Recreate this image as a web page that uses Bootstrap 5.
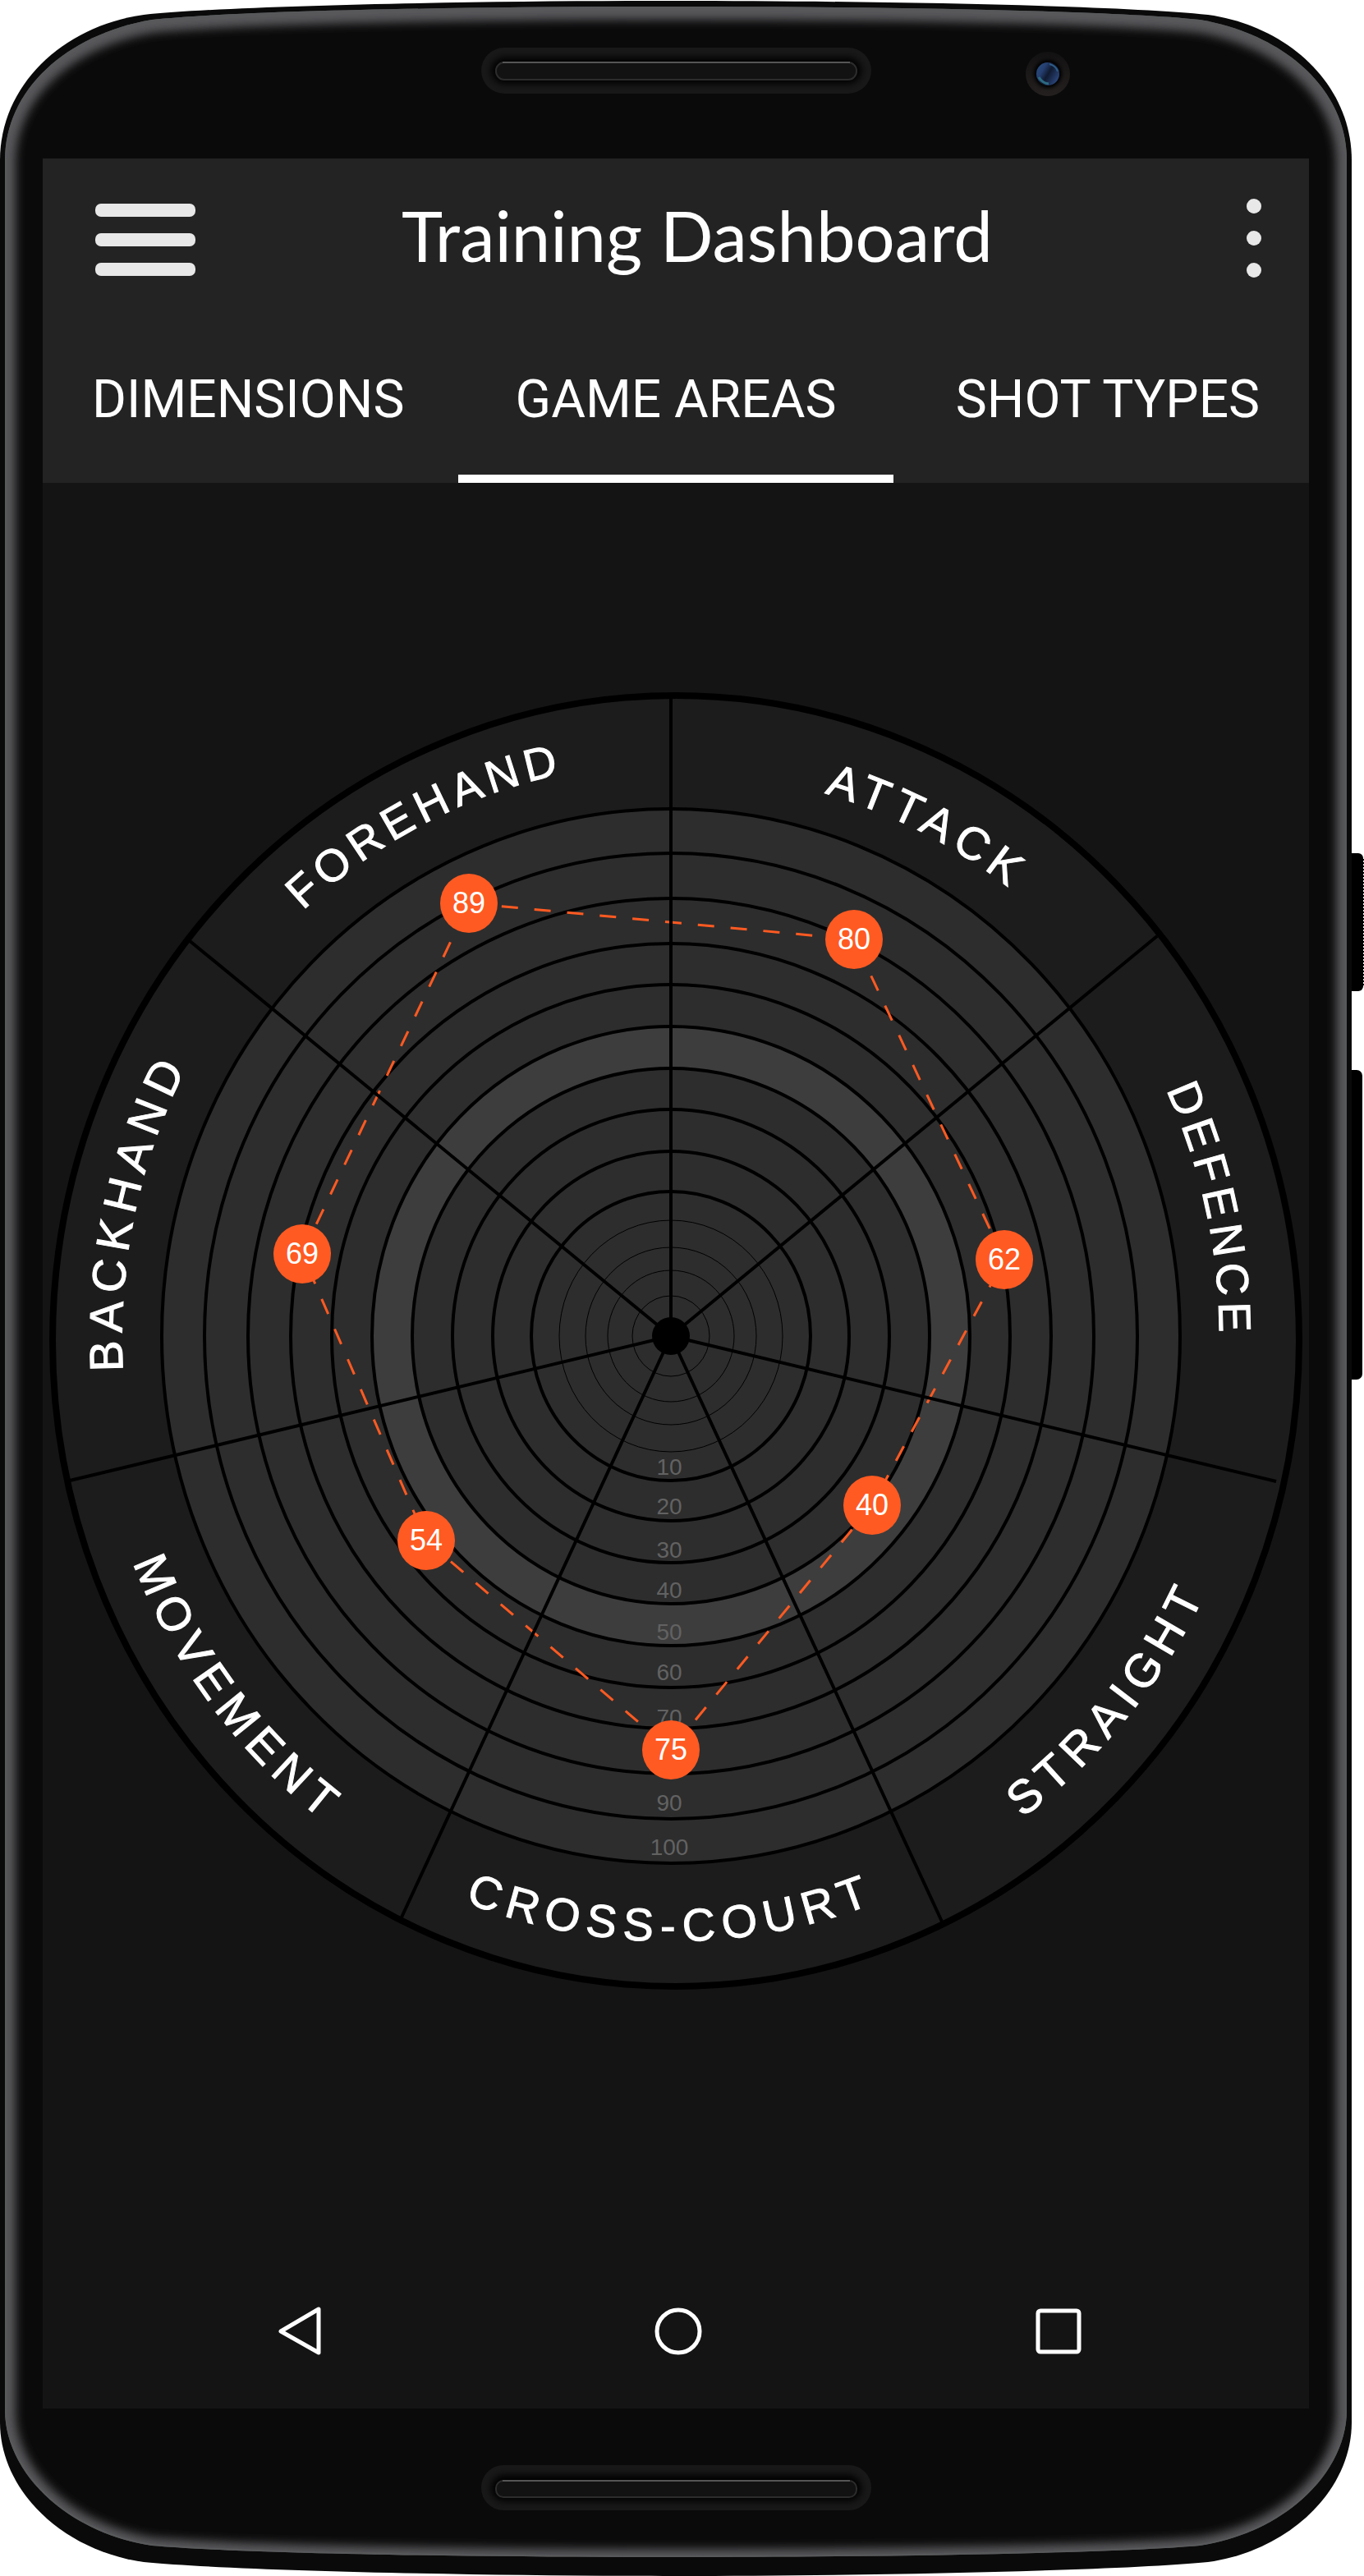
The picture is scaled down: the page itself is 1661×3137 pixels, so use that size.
<!DOCTYPE html>
<html lang="en">
<head>
<meta charset="utf-8">
<meta name="viewport" content="width=device-width, initial-scale=1">
<title>Training Dashboard</title>
<link href="https://cdn.jsdelivr.net/npm/bootstrap@5.3.0/dist/css/bootstrap.min.css" rel="stylesheet">
<style>
  body { background: #fff; font-family: Roboto, "Liberation Sans", sans-serif; }
  .device { padding: 193px 67px 204px 52px; }
  .device-shell { z-index: 0; }
  .device-screen { z-index: 1; background: #141414; }
  .app-top { background: #232323; }
  .app-bar { height: 193px; padding: 0 58px 0 64px; }
  .app-title { font-family: Lato, sans-serif; font-size: 85px; line-height: 96px; font-weight: 400; }
  .more-btn { width: 76px; }
  .tab-row { height: 202px; }
  .tab-row .tab-link {
    flex: 1 1 0; font-size: 64px; line-height: 72px; white-space: nowrap;
    padding: 10px 60px 0; border-bottom: 10px solid transparent;
  }
  .tab-row .tab-link.active { flex: 0 0 530px; border-bottom-color: #fff; }
  .sys-nav { padding: 109px 277px 65px 287px; }
  .wheel { display: block; width: 100%; height: auto; }
  .area-name { font: 56px "Liberation Sans", Arial, sans-serif; letter-spacing: 8px; fill: #fff; stroke: #fff; stroke-width: 1px; }
  .area-name.tight { font-size: 55px; letter-spacing: 7px; }
  .area-name.airy { letter-spacing: 9px; }
  .area-name.wide { font-size: 57px; }
  .scale-num { font: 28px "Liberation Sans", Arial, sans-serif; fill: #626262; text-anchor: middle; }
  .score-num { font: 36px "Liberation Sans", Arial, sans-serif; fill: #fff; text-anchor: middle; }
</style>
<script src="https://cdn.jsdelivr.net/npm/bootstrap@5.3.0/dist/js/bootstrap.bundle.min.js"></script>
</head>
<body>
<div class="device position-relative">

  <!-- Handset body, speakers, camera and side keys -->
  <svg class="device-shell position-absolute top-0 start-0 w-100 h-100" viewBox="0 0 1661 3137" preserveAspectRatio="none" aria-hidden="true">
    <defs>
      <path id="rim" d="M6 195C6 110 80 42 185 24C300 12 600 8 823 8C1046 8 1346 12 1461 24C1566 42 1640 110 1640 195V2935C1640 3010 1566 3084 1461 3100C1346 3110 1046 3114 823 3114C600 3114 300 3110 185 3100C80 3084 6 3010 6 2935Z"/>
      <clipPath id="rimClip"><use href="#rim"/></clipPath>
      <filter id="soft" x="-5%" y="-5%" width="110%" height="110%"><feGaussianBlur stdDeviation="6"/></filter>
      <filter id="slotSoft" x="-5%" y="-60%" width="110%" height="220%"><feGaussianBlur stdDeviation="4"/></filter>
      <filter id="lensSoft" x="-50%" y="-50%" width="200%" height="200%"><feGaussianBlur stdDeviation="2"/></filter>
      <linearGradient id="ring" x1="0" y1="0" x2="0" y2="1"><stop offset="0" stop-color="#121111"/><stop offset="1" stop-color="#252020"/></linearGradient>
      <linearGradient id="lens" x1="0" y1="0" x2="1" y2=".6"><stop offset="0" stop-color="#2a5080"/><stop offset=".35" stop-color="#253f70"/><stop offset=".6" stop-color="#101a30"/><stop offset="1" stop-color="#2a4478"/></linearGradient>
    </defs>
    <rect x="1636" y="1039" width="24" height="168" rx="6" fill="#000"/>
    <path d="M1660 1046V1200" stroke="#000" stroke-width="2" stroke-dasharray="2 2"/>
    <rect x="1636" y="1303" width="23" height="377" rx="7" fill="#000"/>
    <path fill="#0a0a0a" d="M0 195C0 105 75 32 175 18C290 6 600 1 823 1C1046 1 1356 6 1471 18C1571 32 1646 105 1646 195V2950C1646 3032 1571 3106 1471 3120C1356 3131 1046 3137 823 3137C600 3137 290 3131 175 3120C75 3106 0 3032 0 2950Z"/>
    <g clip-path="url(#rimClip)">
      <use href="#rim" fill="none" stroke="#58595b" stroke-width="26" filter="url(#soft)" transform="translate(0 3)"/>
      <use href="#rim" fill="none" stroke="#58595b" stroke-width="4"/>
    </g>
    <rect x="586" y="58" width="475" height="56" rx="28" fill="#181818"/>
    <rect x="598" y="70" width="451" height="32" rx="16" fill="#000" filter="url(#slotSoft)"/>
    <rect x="604" y="76" width="439" height="21" rx="10" fill="#121212" stroke="#2c2c2c" stroke-width="2"/>
    <path d="M612 76H1035" stroke="#555" stroke-width="2"/>
    <rect x="586" y="3002" width="475" height="55" rx="27" fill="#181818"/>
    <rect x="598" y="3014" width="451" height="32" rx="16" fill="#000" filter="url(#slotSoft)"/>
    <rect x="604" y="3021" width="439" height="20" rx="9" fill="#121212" stroke="#2c2c2c" stroke-width="2"/>
    <path d="M612 3021H1035" stroke="#555" stroke-width="2"/>
    <circle cx="1276" cy="90" r="27" fill="url(#ring)"/>
    <circle cx="1276" cy="90" r="17" fill="#050505" filter="url(#lensSoft)"/>
    <circle cx="1276" cy="90" r="14" fill="url(#lens)"/>
    <path d="M1265 94Q1269 101 1277 102" fill="none" stroke="#2c6a80" stroke-width="3"/>
    <path d="M1278 78Q1286 80 1288 87" fill="none" stroke="#2d5c86" stroke-width="2"/>
  </svg>

  <main class="device-screen position-relative d-flex flex-column text-white">
    <header class="app-top">
      <div class="app-bar d-flex align-items-center">
        <button type="button" class="btn p-0 border-0" aria-label="Menu">
          <svg class="d-block" width="122" height="92" viewBox="0 -4 122 92" fill="#e8e8e8"><rect width="122" height="16" rx="7"/><rect y="36" width="122" height="16" rx="7"/><rect y="72" width="122" height="16" rx="7"/></svg>
        </button>
        <h1 class="app-title flex-fill text-center m-0 pb-2">Training Dashboard</h1>
        <button type="button" class="more-btn btn p-0 border-0 d-flex justify-content-end" aria-label="More options">
          <svg width="18" height="96" viewBox="0 0 18 96" fill="#e8e8e8"><circle cx="9" cy="9" r="9"/><circle cx="9" cy="48" r="9"/><circle cx="9" cy="87" r="9"/></svg>
        </button>
      </div>
      <nav class="tab-row d-flex" aria-label="Dashboard sections">
        <a href="#dimensions" class="tab-link d-flex align-items-center justify-content-start text-white text-decoration-none">DIMENSIONS</a>
        <a href="#game-areas" class="tab-link active d-flex align-items-center justify-content-center text-white text-decoration-none" aria-current="page">GAME AREAS</a>
        <a href="#shot-types" class="tab-link d-flex align-items-center justify-content-end text-white text-decoration-none">SHOT TYPES</a>
      </nav>
    </header>

    <!-- Score wheel -->
    <svg class="wheel" viewBox="52 588 1542 2112" role="img" aria-label="Scores by game area">
      <defs>
        <path id="arcBackhand" d="M150 1670A668 698 0 0 1 249 1260"/>
        <path id="arcForehand" d="M369 1109A668 698 0 0 1 720 936"/>
        <path id="arcAttack" d="M1004 966A676 688 0 0 1 1330 1179"/>
        <path id="arcDefence" d="M1420 1327A668 698 0 0 1 1479 1720"/>
        <path id="arcMovement" d="M162 1903A706 737 0 0 0 500 2286"/>
        <path id="arcCross" d="M566 2316A706 737 0 0 0 1090 2307"/>
        <path id="arcStraight" d="M1245 2214A720 730 0 0 0 1485 1900"/>
      </defs>
      <ellipse cx="823" cy="1633" rx="759" ry="786" fill="#1c1c1c" stroke="#000" stroke-width="8"/>
      <g stroke="#000" stroke-width="4" fill="#2d2d2d">
        <ellipse cx="817" cy="1627" rx="620" ry="642"/>
        <ellipse cx="817" cy="1627" rx="568" ry="588"/>
        <ellipse cx="817" cy="1627" rx="515" ry="533"/>
        <ellipse cx="817" cy="1627" rx="463" ry="478"/>
        <ellipse cx="817" cy="1627" rx="413" ry="428"/>
        <ellipse cx="817" cy="1627" rx="364" ry="377" fill="#3d3d3d"/>
        <ellipse cx="817" cy="1627" rx="315" ry="326"/>
        <ellipse cx="817" cy="1627" rx="266" ry="276"/>
        <ellipse cx="817" cy="1627" rx="217" ry="225"/>
        <ellipse cx="817" cy="1627" rx="170" ry="176"/>
      </g>
      <g stroke="#000" stroke-width="1" fill="none">
        <ellipse cx="817" cy="1627" rx="136" ry="141"/>
        <ellipse cx="817" cy="1627" rx="104" ry="108"/>
        <ellipse cx="817" cy="1627" rx="77" ry="80"/>
        <ellipse cx="817" cy="1627" rx="47" ry="49"/>
      </g>
      <g class="scale-num">
        <text x="815" y="1796">10</text><text x="815" y="1844">20</text><text x="815" y="1897">30</text>
        <text x="815" y="1946">40</text><text x="815" y="1997">50</text><text x="815" y="2046">60</text>
        <text x="815" y="2101">70</text><text x="815" y="2205">90</text><text x="815" y="2259">100</text>
      </g>
      <path d="M571 1100L1040 1144L1223 1534L1062 1833L817 2131L519 1876L368 1527Z" fill="none" stroke="#ff5a22" stroke-width="3" stroke-dasharray="20 20"/>
      <path d="M817 1627V848M817 1627L1409 1140M817 1627L1554 1804M817 1627L1147 2340M817 1627L488 2337M817 1627L85 1803M817 1627L230 1145" stroke="#000" stroke-width="4"/>
      <circle cx="817" cy="1627" r="23"/>
      <g fill="#ff5a22">
        <ellipse cx="571" cy="1100" rx="35" ry="36"/><ellipse cx="1040" cy="1144" rx="35" ry="36"/>
        <ellipse cx="1223" cy="1534" rx="35" ry="36"/><ellipse cx="1062" cy="1833" rx="35" ry="36"/>
        <ellipse cx="817" cy="2131" rx="35" ry="36"/><ellipse cx="519" cy="1876" rx="35" ry="36"/>
        <ellipse cx="368" cy="1527" rx="35" ry="36"/>
      </g>
      <g class="score-num">
        <text x="571" y="1112">89</text><text x="1040" y="1156">80</text><text x="1223" y="1546">62</text>
        <text x="1062" y="1845">40</text><text x="817" y="2143">75</text><text x="519" y="1888">54</text><text x="368" y="1539">69</text>
      </g>
      <text class="area-name airy wide"><textPath href="#arcBackhand">BACKHAND</textPath></text>
      <text class="area-name tight"><textPath href="#arcForehand">FOREHAND</textPath></text>
      <text class="area-name"><textPath href="#arcAttack">ATTACK</textPath></text>
      <text class="area-name tight"><textPath href="#arcDefence">DEFENCE</textPath></text>
      <text class="area-name airy wide"><textPath href="#arcMovement">MOVEMENT</textPath></text>
      <text class="area-name airy"><textPath href="#arcCross">CROSS-COURT</textPath></text>
      <text class="area-name airy wide"><textPath href="#arcStraight">STRAIGHT</textPath></text>
    </svg>

    <footer class="sys-nav d-flex align-items-center justify-content-between">
      <button type="button" class="btn p-0 border-0" aria-label="Back">
        <svg class="d-block" width="52" height="59" viewBox="0 0 52 59" fill="none" stroke="#fff" stroke-width="5" stroke-linejoin="round"><path d="M49 3V56L3 30Z"/></svg>
      </button>
      <button type="button" class="btn p-0 border-0" aria-label="Home">
        <svg class="d-block" width="58" height="58" viewBox="0 0 58 58" fill="none" stroke="#fff" stroke-width="5"><circle cx="29" cy="29" r="26"/></svg>
      </button>
      <button type="button" class="btn p-0 border-0" aria-label="Recent apps">
        <svg class="d-block" width="56" height="56" viewBox="0 0 56 56" fill="none" stroke="#fff" stroke-width="5"><rect x="3" y="3" width="50" height="50" rx="3"/></svg>
      </button>
    </footer>
  </main>
</div>
</body>
</html>
